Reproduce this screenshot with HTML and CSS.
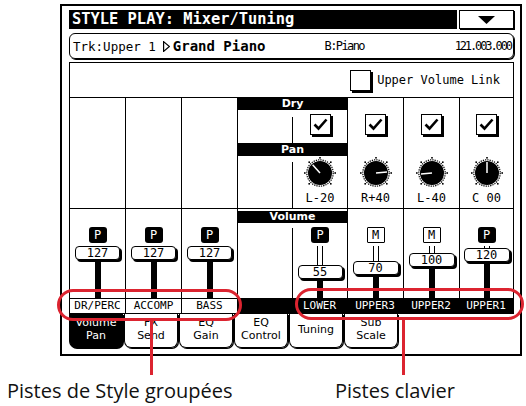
FILE: index.html
```html
<!DOCTYPE html>
<html>
<head>
<meta charset="utf-8">
<link rel="stylesheet" href="styles.css">
</head>
<body>
<div class="page">
  <div class="screen">
    <div class="titlerow">
      <div class="title">STYLE PLAY: Mixer/Tuning</div>
      <div class="dropdown"><svg width="17" height="8" viewBox="0 0 17 8"><polygon points="0,0 17,0 8.5,8" fill="#000"/></svg></div>
    </div>
    <div class="trackrow">
      <span class="trk">Trk:Upper 1</span>
      <svg class="arrow" width="7" height="11" viewBox="0 0 7 11"><polygon points="0.6,0.6 6.4,5.5 0.6,10.4" fill="none" stroke="#000" stroke-width="1.2"/></svg>
      <span class="sound">Grand Piano</span>
      <span class="bank">B:Piano</span>
      <span class="num">121.003.000</span>
    </div>
    <div class="panel">
      <div class="linkrow">
        <span class="cb"></span>
        <span>Upper Volume Link</span>
      </div>

      <div class="section top">
        <div class="col first"></div>
        <div class="col"></div>
        <div class="col"></div>
        <div class="group">
          <div class="bar dry">Dry</div>
          <div class="grp-row r-cb">
            <div class="gap"></div>
            <div class="chan">
              <span class="cb"><svg width="19" height="19" viewBox="0 0 19 19"><path d="M3.5 9.5 L7.5 13.5 L15.5 4.5" fill="none" stroke="#000" stroke-width="2.6"/></svg></span>
            </div>
          </div>
          <div class="bar pan">Pan</div>
          <div class="grp-row r-knob">
            <div class="gap"></div>
            <div class="chan">
              <svg class="knob" width="32" height="32" viewBox="0 0 32 32">
                <g fill="#000"><rect x="15.2" y="0" width="1.6" height="1.6"/><rect x="4.4" y="4.4" width="1.6" height="1.6"/><rect x="26" y="4.4" width="1.6" height="1.6"/><rect x="0" y="15.2" width="1.6" height="1.6"/><rect x="30.4" y="15.2" width="1.6" height="1.6"/><rect x="4.4" y="26" width="1.6" height="1.6"/><rect x="26" y="26" width="1.6" height="1.6"/></g>
                <circle cx="16" cy="16" r="12" fill="#000"/>
                <circle cx="16" cy="16" r="13.2" fill="none" stroke="#000" stroke-width="1.2" stroke-dasharray="1.3 1"/>
                <line x1="16" y1="16" x2="8.6" y2="7.8" stroke="#fff" stroke-width="1.5"/>
              </svg>
              <span class="val">L-20</span>
            </div>
          </div>
        </div>
        <div class="col ch">
          <span class="cb"><svg width="19" height="19" viewBox="0 0 19 19"><path d="M3.5 9.5 L7.5 13.5 L15.5 4.5" fill="none" stroke="#000" stroke-width="2.6"/></svg></span>
          <svg class="knob" width="32" height="32" viewBox="0 0 32 32">
            <g fill="#000"><rect x="15.2" y="0" width="1.6" height="1.6"/><rect x="4.4" y="4.4" width="1.6" height="1.6"/><rect x="26" y="4.4" width="1.6" height="1.6"/><rect x="0" y="15.2" width="1.6" height="1.6"/><rect x="30.4" y="15.2" width="1.6" height="1.6"/><rect x="4.4" y="26" width="1.6" height="1.6"/><rect x="26" y="26" width="1.6" height="1.6"/></g>
            <circle cx="16" cy="16" r="12" fill="#000"/>
            <circle cx="16" cy="16" r="13.2" fill="none" stroke="#000" stroke-width="1.2" stroke-dasharray="1.3 1"/>
            <line x1="16" y1="16" x2="27" y2="15" stroke="#fff" stroke-width="1.5"/>
          </svg>
          <span class="val">R+40</span>
        </div>
        <div class="col ch">
          <span class="cb"><svg width="19" height="19" viewBox="0 0 19 19"><path d="M3.5 9.5 L7.5 13.5 L15.5 4.5" fill="none" stroke="#000" stroke-width="2.6"/></svg></span>
          <svg class="knob" width="32" height="32" viewBox="0 0 32 32">
            <g fill="#000"><rect x="15.2" y="0" width="1.6" height="1.6"/><rect x="4.4" y="4.4" width="1.6" height="1.6"/><rect x="26" y="4.4" width="1.6" height="1.6"/><rect x="0" y="15.2" width="1.6" height="1.6"/><rect x="30.4" y="15.2" width="1.6" height="1.6"/><rect x="4.4" y="26" width="1.6" height="1.6"/><rect x="26" y="26" width="1.6" height="1.6"/></g>
            <circle cx="16" cy="16" r="12" fill="#000"/>
            <circle cx="16" cy="16" r="13.2" fill="none" stroke="#000" stroke-width="1.2" stroke-dasharray="1.3 1"/>
            <line x1="16" y1="16" x2="5" y2="17" stroke="#fff" stroke-width="1.5"/>
          </svg>
          <span class="val">L-40</span>
        </div>
        <div class="col ch last">
          <span class="cb"><svg width="19" height="19" viewBox="0 0 19 19"><path d="M3.5 9.5 L7.5 13.5 L15.5 4.5" fill="none" stroke="#000" stroke-width="2.6"/></svg></span>
          <svg class="knob" width="32" height="32" viewBox="0 0 32 32">
            <g fill="#000"><rect x="15.2" y="0" width="1.6" height="1.6"/><rect x="4.4" y="4.4" width="1.6" height="1.6"/><rect x="26" y="4.4" width="1.6" height="1.6"/><rect x="0" y="15.2" width="1.6" height="1.6"/><rect x="30.4" y="15.2" width="1.6" height="1.6"/><rect x="4.4" y="26" width="1.6" height="1.6"/><rect x="26" y="26" width="1.6" height="1.6"/></g>
            <circle cx="16" cy="16" r="12" fill="#000"/>
            <circle cx="16" cy="16" r="13.2" fill="none" stroke="#000" stroke-width="1.2" stroke-dasharray="1.3 1"/>
            <line x1="16" y1="16" x2="16" y2="5" stroke="#fff" stroke-width="1.5"/>
          </svg>
          <span class="val">C 00</span>
        </div>
      </div>

      <div class="section bottom">
        <div class="col first sl">
          <span class="badge p">P</span>
          <span class="track" style="height:0px"></span>
          <span class="vbox">127</span>
          <span class="stem"></span>
        </div>
        <div class="col sl">
          <span class="badge p">P</span>
          <span class="track" style="height:0px"></span>
          <span class="vbox">127</span>
          <span class="stem"></span>
        </div>
        <div class="col sl">
          <span class="badge p">P</span>
          <span class="track" style="height:0px"></span>
          <span class="vbox">127</span>
          <span class="stem"></span>
        </div>
        <div class="group">
          <div class="bar vol">Volume</div>
          <div class="grp-row r-vol">
            <div class="gap"></div>
            <div class="chan">
              <span class="badge p">P</span>
              <span class="track" style="height:19px"></span>
              <span class="vbox">55</span>
              <span class="stem"></span>
            </div>
          </div>
        </div>
        <div class="col sl">
          <span class="badge m">M</span>
          <span class="track" style="height:15px"></span>
          <span class="vbox wide">70</span>
          <span class="stem"></span>
        </div>
        <div class="col sl">
          <span class="badge m">M</span>
          <span class="track" style="height:7px"></span>
          <span class="vbox wide">100</span>
          <span class="stem"></span>
        </div>
        <div class="col sl last">
          <span class="badge p">P</span>
          <span class="track" style="height:2px"></span>
          <span class="vbox wide">120</span>
          <span class="stem"></span>
        </div>
      </div>

      <div class="strip">
        <span class="lb first">DR/PERC</span>
        <span class="lb">ACCOMP</span>
        <span class="lb">BASS</span>
        <div class="dark">
          <span class="dl gapw"></span>
          <span class="dl lw">LOWER</span>
          <span class="dl">UPPER3</span>
          <span class="dl">UPPER2</span>
          <span class="dl last">UPPER1</span>
        </div>
      </div>
    </div>
    <div class="tabs">
      <div class="tab active"><span>Volume</span><span>Pan</span></div>
      <div class="tab"><span>FX</span><span>Send</span></div>
      <div class="tab"><span>EQ</span><span>Gain</span></div>
      <div class="tab"><span>EQ</span><span>Control</span></div>
      <div class="tab"><span>Tuning</span></div>
      <div class="tab"><span>Sub</span><span>Scale</span></div>
    </div>
  </div>

  <div class="captions">
    <span class="cap1">Pistes de Style groupées</span>
    <span class="cap2">Pistes clavier</span>
  </div>

  <div class="callout c1"></div>
  <div class="callout c2"></div>
  <div class="lead l1"></div>
  <div class="lead l2"></div>
</div>
</body>
</html>
```

FILE: styles.css
```css
* { box-sizing: border-box; }
body {
  margin: 0;
  background: #fff;
  color: #000;
  font-family: "DejaVu Sans Mono", monospace;
}
.page {
  position: relative;
  width: 526px;
  height: 406px;
  overflow: hidden;
}
.screen {
  margin: 4px 0 0 60px;
  width: 462px;
  height: 352px;
  border: 2px solid #000;
  padding: 4px 6px 6px 7px;
  display: flex;
  flex-direction: column;
}
.titlerow {
  display: flex;
  height: 19px;
  gap: 2px;
}
.title {
  flex: 1;
  background: #000;
  color: #fff;
  font-weight: bold;
  font-size: 15.4px;
  line-height: 19px;
  padding-left: 3px;
  white-space: nowrap;
}
.dropdown {
  width: 55px;
  border: 1px solid #000;
  box-shadow: 1px 1px 0 #000;
  display: flex;
  align-items: center;
  justify-content: center;
}
.trackrow {
  margin-top: 4px;
  height: 26px;
  border: 1px solid #000;
  border-radius: 6px;
  box-shadow: 1px 1px 0 #000;
  display: flex;
  align-items: center;
  padding: 0 2px 0 3px;
  white-space: nowrap;
}
.trk { font-size: 12.5px; }
.arrow { margin-left: 7px; }
.sound { margin-left: 3px; font-weight: bold; font-size: 14px; }
.bank { margin-left: 59px; font-size: 12px; letter-spacing: -1.6px; }
.num { margin-left: auto; font-size: 12px; letter-spacing: -2.1px; }

.panel {
  margin-top: 3px;
  border: 1px solid #000;
  display: flex;
  flex-direction: column;
}
.linkrow {
  height: 35px;
  border-bottom: 1px solid #000;
  display: flex;
  align-items: center;
  justify-content: flex-end;
  gap: 6px;
  padding-right: 13px;
  font-size: 12px;
}
.cb {
  width: 21px;
  height: 21px;
  flex: none;
  border: 1px solid #000;
  box-shadow: 2px 2px 0 #000;
  background: #fff;
  display: flex;
  align-items: center;
  justify-content: center;
}
.section { display: flex; }
.section.top { height: 111px; border-bottom: 1px solid #000; }
.section.bottom { height: 89px; }
.col {
  width: 56px;
  border-left: 1px solid #000;
  display: flex;
  flex-direction: column;
  align-items: center;
}
.col.first { width: 55px; border-left: none; }
.col.last { width: 54px; }
.col.ch { padding-top: 16px; }
.col.ch .knob { margin-top: 22px; }
.val { margin-top: 2px; font-size: 12px; line-height: 14px; }

.group {
  width: 110px;
  border-left: 1px solid #000;
  display: flex;
  flex-direction: column;
}
.bar {
  background: #000;
  color: #fff;
  font-family: "DejaVu Sans", sans-serif;
  font-weight: bold;
  font-size: 11px;
  text-align: center;
}
.bar.dry { height: 12px; line-height: 12px; }
.bar.pan { height: 13px; line-height: 13px; }
.bar.vol { margin-top: 2px; height: 12px; line-height: 12px; }
.grp-row { display: flex; }
.grp-row .gap { width: 55px; border-right: 1px solid #000; }
.grp-row .chan {
  flex: 1;
  display: flex;
  flex-direction: column;
  align-items: center;
}
.r-cb { height: 33px; }
.r-cb .gap { margin-top: 7px; }
.r-cb .chan { padding-top: 4px; }
.r-knob { flex: 1; }
.r-knob .gap { margin-top: 6px; }
.r-knob .chan { padding-top: 1px; }
.r-vol { flex: 1; }
.r-vol .gap { margin-top: 5px; }
.r-vol .chan { padding-top: 4px; }

.col.sl { padding-top: 18px; }
.badge {
  width: 18px;
  height: 16px;
  font-size: 12px;
  line-height: 16px;
  text-align: center;
  border-radius: 3px;
  flex: none;
}
.badge.p { background: #000; color: #fff; }
.badge.m { border: 1px solid #000; border-radius: 1px; line-height: 14px; }
.track {
  width: 6px;
  margin-top: 3px;
  border-left: 1px solid #000;
  border-right: 1px solid #000;
  flex: none;
}
.vbox {
  width: 45px;
  height: 14px;
  flex: none;
  border: 1px solid #000;
  border-radius: 4px;
  box-shadow: 2px 2px 0 #000;
  background: #fff;
  font-size: 12px;
  line-height: 12px;
  text-align: center;
}
.vbox.wide { width: 46px; }
.stem { width: 6px; flex: 1; background: #000; }

.strip {
  display: flex;
  height: 15px;
  border-top: 1px solid #000;
  font-size: 11px;
  line-height: 14px;
}
.lb { width: 56px; border-left: 1px solid #000; text-align: center; }
.lb.first { width: 55px; border-left: none; }
.dark { flex: 1; display: flex; background: #000; color: #fff; }
.dl { width: 56px; text-align: center; }
.dl.gapw { width: 55px; }
.dl.lw { width: 55px; }
.dl.last { width: 54px; }

.tabs {
  display: flex;
  gap: 1px;
  height: 34px;
}
.tab {
  width: 54px;
  border: 1px solid #000;
  border-top: none;
  border-radius: 0 0 7px 7px;
  box-shadow: 1px 1px 0 #000;
  font-family: "DejaVu Sans", sans-serif;
  font-size: 11px;
  line-height: 13px;
  display: flex;
  flex-direction: column;
  justify-content: center;
  align-items: center;
  padding-bottom: 3px;
}
.tab.active { background: #000; color: #fff; }

.captions {
  display: flex;
  margin-top: 21px;
  font-family: "Open Sans", sans-serif;
  font-size: 20px;
  line-height: 27px;
  color: #111;
  white-space: nowrap;
}
.cap1 { width: 335px; padding-left: 7px; }

.callout {
  position: absolute;
  border: 3px solid #dc2430;
  border-radius: 16px;
}
.c1 { left: 57px; top: 289px; width: 185px; height: 32px; }
.c2 { left: 295px; top: 288px; width: 229px; height: 32px; }
.lead { position: absolute; width: 3px; background: #dc2430; }
.l1 { left: 150px; top: 320px; height: 55px; }
.l2 { left: 402px; top: 319px; height: 56px; }
```
